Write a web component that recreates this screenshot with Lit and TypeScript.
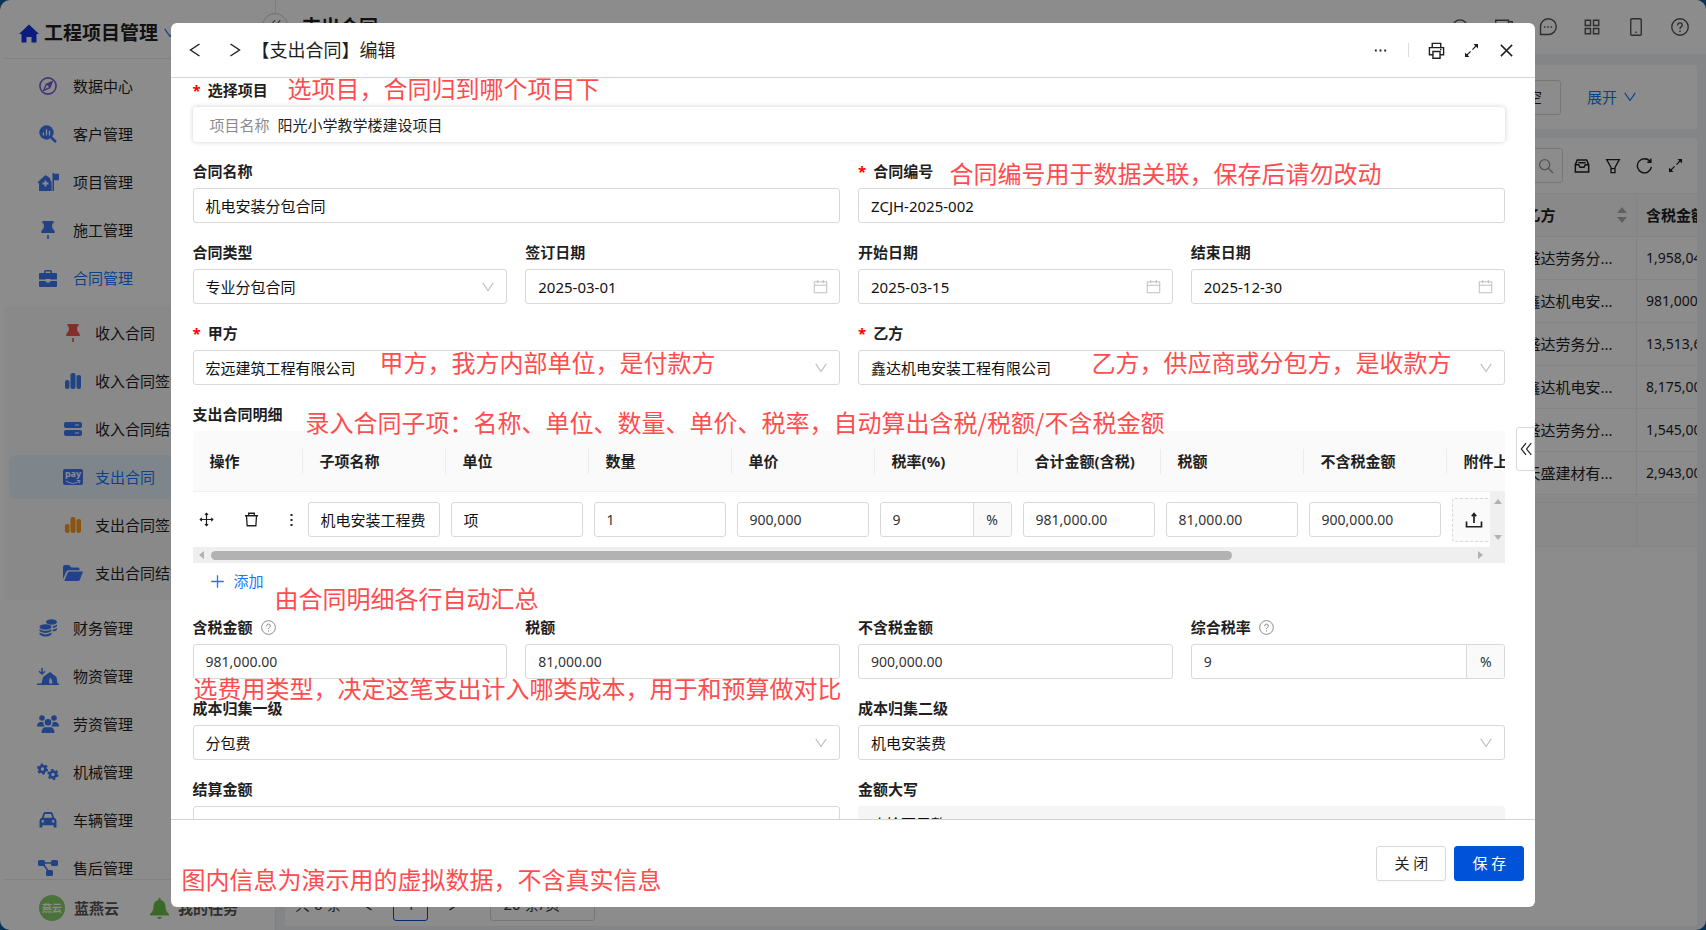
import { LitElement, html, css, svg, nothing } from "lit";
import { customElement } from "lit/decorators.js";
import { classMap } from "lit/directives/class-map.js";
import { styleMap } from "lit/directives/style-map.js";

const line = (body: unknown, size = 18, width = 1.4, box = 24) => html`<svg
  width=${size} height=${size} viewBox="0 0 ${box} ${box}" fill="none" stroke="currentColor"
  stroke-width=${width * box / size} aria-hidden="true">${body}</svg>`;
const solid = (body: unknown, w = 20, h = 18, box = "0 0 20 18") => html`<svg
  width=${w} height=${h} viewBox=${box} fill="currentColor" aria-hidden="true">${body}</svg>`;

const icons = {
  home: solid(svg`<path d="M10 0 0 9.5h2.5V18h5v-5.5h5V18h5V9.5H20z"/>`, 20, 19, "0 0 20 18"),
  compass: html`<svg width="18" height="18" viewBox="0 0 18 18" aria-hidden="true"><circle cx="9" cy="9" r="8.1" fill="none" stroke="currentColor" stroke-width="1.6"/><path d="M13.2 4.6 7.3 7.3 4.8 13.3l6-2.6z" fill="none" stroke="currentColor" stroke-width="1.4"/><path d="M13 4.8 7.6 7.6l2.8 2.8z" fill="currentColor"/></svg>`,
  customer: solid(svg`<circle cx="7.5" cy="7.5" r="7.2"/><path d="M12.2 12.5 17 17" stroke="currentColor" stroke-width="2.6"/><path d="M4.4 7.5v3M7.5 4.3v6.2M10.5 6v4.5" stroke="#fff" stroke-width="1.3"/>`, 18, 18, "0 0 18 18"),
  project: solid(svg`<path d="M8.5 2 0 9.7h2V18h12.600V9L13 6V5zM15.500 18V0h1.500v.8h5v6.500h-5V18z"/><path d="M8.500 7.500v6M5.500 10.500h6" stroke="#fff" stroke-width="1.800"/>`, 22, 18, "0 0 22 18"),
  pin: solid(svg`<path d="M1.500 0h11v2.500h-1.300v4.200L13.700 10v2H.300v-2l2.500-3.300V2.500H1.500zM6.200 14h1.600v4H6.200z"/>`, 14, 18, "0 0 14 18"),
  briefcase: solid(svg`<path d="M5 3V1.500Q5 0 6.500 0h5Q13 0 13 1.500V3h4q1 0 1 1v5.500h-6.500V9h-5v.5H0V4q0-1 1-1zM6.500 3h5V1.500h-5zM0 11h6.500q0 1.800 2.500 1.800t2.500-1.800H18V16q0 1-1 1H1q-1 0-1-1z" fill-rule="evenodd"/>`, 18, 17, "0 0 18 17"),
  bars: solid(svg`<rect x="0" y="7" width="4.500" height="9" rx="2"/><rect x="5.500" y="0" width="5" height="16" rx="2"/><rect x="11.500" y="2" width="4.500" height="14" rx="2"/>`, 16, 16, "0 0 16 16"),
  server: solid(svg`<rect width="18" height="6" rx="2"/><rect y="8" width="18" height="6" rx="2"/><path d="M11 3h4M11 11h4" stroke="#fff" stroke-width="1"/>`, 18, 14, "0 0 18 14"),
  folder: solid(svg`<path d="M0 14V2Q0 0 2 0h4l2.500 2.500H15q1.500 0 1.500 1.500v1.200H5.500Q4 5.200 3.300 6.800zM1.300 16 4.500 8Q5 6.500 6.500 6.500H20L17 14.500Q16.500 16 15 16z"/>`, 20, 16, "0 0 20 16"),
  coins: solid(svg`<ellipse cx="12.500" cy="3" rx="5.500" ry="2.800"/><ellipse cx="6.500" cy="8" rx="6" ry="2.700"/><path d="M.500 10.200q6 3.600 12 0v1.800q-6 3.800-12 0zM.500 13.600q6 3.600 12 0v1.800q-6 4.400-12 0zM13.800 7q3-.400 4.200-1.600v1.800Q16.500 8.600 13.800 9zM13.800 10.600q3-.400 4.200-1.600v1.800q-1.500 1.400-4.200 1.800z"/>`, 18, 18, "0 0 18 18"),
  goods: solid(svg`<path d="M0 15.500h4.500L6 9l7-5 6.500 5 1 6.500H22V17H0zM13 9.500q-.8 2-.8 6h3.300q-.2-4-2.500-6z" fill-rule="evenodd"/><path d="M5 0v6M2 3.200 5 6l3-2.800" fill="none" stroke="currentColor" stroke-width="1.500"/>`, 22, 17, "0 0 22 17"),
  people: solid(svg`<circle cx="5" cy="3" r="2.800"/><circle cx="17" cy="3" r="2.800"/><circle cx="11" cy="7.200" r="3.300"/><path d="M0 11.500Q0 7 4 7h2.200q0 3 2 4.500zM22 11.500Q22 7 18 7h-2.200q0 3-2 4.500zM4.500 18Q4.500 12.300 9 12.300h4q4.500 0 4.500 5.700z"/>`, 22, 18, "0 0 22 18"),
  gears: solid(svg`<g fill="none" stroke="currentColor"><circle cx="5.500" cy="6" r="3" stroke-width="2.600"/><circle cx="5.500" cy="6" r="4.700" stroke-width="1.800" stroke-dasharray="2.460"/><circle cx="16" cy="11.500" r="3" stroke-width="2.600"/><circle cx="16" cy="11.500" r="4.700" stroke-width="1.800" stroke-dasharray="2.460"/></g>`, 22, 18, "0 0 22 18"),
  car: solid(svg`<path d="M3.800 1.800Q4.300 0 6 0h6q1.700 0 2.200 1.800L15.500 6Q18 6.800 18 9v7.500h-3V14H3v2.500H0V9Q0 6.800 2.500 6zM4.500 6h9L12.300 2.200H5.700zM3.500 8.500a1.400 1.400 0 1 0 .010 0zM14.500 8.500a1.400 1.400 0 1 0 .010 0z" fill-rule="evenodd"/>`, 18, 16, "0 0 18 17"),
  nodes: solid(svg`<rect width="7" height="6" rx="1.500"/><rect x="13" width="7" height="6" rx="1.500"/><rect x="8" y="10" width="7" height="6" rx="1.500"/><path d="M6 3h8M5.500 4.500l5 7" stroke="currentColor" stroke-width="1.500"/>`, 20, 16, "0 0 20 16"),
  bell: solid(svg`<path d="M8.500 0h2v2q5 1 5 6.500 0 4.500 3.500 7.500v1.500H0V16q3.500-3 3.500-7.500Q3.500 3 8.500 2zM7 19h5q-.500 2-2.500 2T7 19z"/>`, 19, 21, "0 0 19 21"),
  down: line(svg`<path d="M3 5l9 13 9-13"/>`, 14, 1.2),
  left: line(svg`<path d="M18 4 6 12l12 8"/>`, 18, 1.4),
  right: line(svg`<path d="M6 4l12 8-12 8"/>`, 18, 1.4),
  monitor: line(svg`<path d="M1 3h17v16H1zM18 5h5v5"/>`),
  ring: line(svg`<circle cx="12" cy="12" r="9.500"/>`),
  chat: line(svg`<path d="M2 22h10A10.500 10.500 0 1 0 2 12z"/><path d="M6.500 12h2M11 12h2M15.500 12h2"/>`),
  grid: line(svg`<path d="M3 3h7v7H3zM14 3h7v7h-7zM3 14h7v7H3zM14 14h7v7h-7z"/>`),
  phone: line(svg`<rect x="5" y="1" width="14" height="22" rx="1.500"/><path d="M11 19h2"/>`),
  help: line(svg`<circle cx="12" cy="12" r="11"/><path d="M9 10q0-3.500 3-3.500t3 3q0 1.500-1.500 2.300T12 14.500M12 16.500v2"/>`),
  search: line(svg`<circle cx="10" cy="10" r="7.500"/><path d="m15.500 15.500 7 7"/>`, 16, 1.3),
  inbox: line(svg`<path d="M2 10 5 3h14l3 7v11H2zM2 10h5l2 4h6l2-4h5M6.500 7h11"/>`, 16, 1.5),
  filter: line(svg`<path d="M2.500 2.500h19L15 14v8H9v-8zM9 16h6"/>`, 16, 1.3),
  reload: line(svg`<path d="M20 6.500A10 10 0 1 0 21.800 14M21 2v5.500h-5"/>`, 17, 1.4),
  expand: line(svg`<path d="M20 4l-6.500 6.500M10.500 13.500 4 20"/><path d="M17.500 2.500h4v4zM2.500 17.500v4h4z" fill="currentColor"/>`, 15, 1.2),
  print: line(svg`<path d="M6 8V2h12v6M6 18H2V8h20v10h-4M7 13.500h10V23H7zM17 10.500h2"/>`, 17, 1.4),
  close: line(svg`<path d="M3 3l18 18M21 3 3 21"/>`, 15, 1.5),
  calendar: line(svg`<path d="M2 4.500h20V22H2zM2 10h20M7.500 1.500V7M16.500 1.500V7"/>`, 15, 1),
  move: line(svg`<path d="M12 2v20M2 12h20M9.500 4.500 12 2l2.500 2.500M9.500 19.500 12 22l2.500-2.500M4.500 9.500 2 12l2.500 2.500M19.500 9.500 22 12l-2.500 2.500"/>`, 15, 1.2),
  trash: line(svg`<path d="M1.500 6h21M7.500 6V2h9v4M4 6l1 16h14l1-16"/>`, 15, 1.3),
  upload: line(svg`<path d="M2 14v7h20v-7M12 16V4M9 7l3-3.500L15 7"/>`, 18, 1.7),
  plus: line(svg`<path d="M12 2v20M2 12h20"/>`, 15, 1.3),
  fold: line(svg`<path d="M12 2 4 12l8 10M21 2l-8 10 8 10"/>`, 14, 1.2),
};

interface MenuItem { text: string; icon: unknown; tone?: string; active?: boolean }

const topMenu: MenuItem[] = [
  { text: "数据中心", icon: icons.compass, tone: "purple" },
  { text: "客户管理", icon: icons.customer },
  { text: "项目管理", icon: icons.project },
  { text: "施工管理", icon: icons.pin },
  { text: "合同管理", icon: icons.briefcase, active: true },
];
const subMenu: MenuItem[] = [
  { text: "收入合同", icon: icons.pin, tone: "red" },
  { text: "收入合同签证", icon: icons.bars },
  { text: "收入合同结算", icon: icons.server },
  { text: "支出合同", icon: html`<span class="pay"><span>pay</span><svg width="18" height="5" viewBox="0 0 18 5" aria-hidden="true"><path d="M2 1q7 4.500 13 .500M13 .500l3-.200-.500 3" fill="none" stroke="#fff"/></svg></span>`, active: true },
  { text: "支出合同签证", icon: icons.bars, tone: "orange" },
  { text: "支出合同结算", icon: icons.folder },
];
const lowMenu: MenuItem[] = [
  { text: "财务管理", icon: icons.coins },
  { text: "物资管理", icon: icons.goods },
  { text: "劳资管理", icon: icons.people },
  { text: "机械管理", icon: icons.gears },
  { text: "车辆管理", icon: icons.car },
  { text: "售后管理", icon: icons.nodes },
];

const rows = [
  ["盛达劳务分...", "1,958,040.00"],
  ["鑫达机电安...", "981,000.00"],
  ["盛达劳务分...", "13,513,600.00"],
  ["鑫达机电安...", "8,175,000.00"],
  ["盛达劳务分...", "1,545,000.00"],
  ["天盛建材有...", "2,943,000.00"],
];

/* Remarks laid over the dialog; x and y are measured from its top left corner. */
const notes = [
  { x: 117, y: 48, text: "选项目，合同归到哪个项目下" },
  { x: 779, y: 133, text: "合同编号用于数据关联，保存后请勿改动" },
  { x: 209, y: 322, text: "甲方，我方内部单位，是付款方" },
  { x: 921, y: 322, text: "乙方，供应商或分包方，是收款方" },
  { x: 135, y: 382, text: "录入合同子项：名称、单位、数量、单价、税率，自动算出含税/税额/不含税金额" },
  { x: 104, y: 558, text: "由合同明细各行自动汇总" },
  { x: 23, y: 648, text: "选费用类型，决定这笔支出计入哪类成本，用于和预算做对比" },
  { x: 11, y: 839, text: "图内信息为演示用的虚拟数据，不含真实信息" },
];

const base = css`
  * { box-sizing: border-box; }
  :host { font-family: "Noto Sans", "Noto Sans CJK SC", sans-serif; font-size: 15px; line-height: 24px; color: #1f1f1f; }
  svg { display: block; flex: none; }
  button { font: inherit; color: inherit; background: none; border: 0; padding: 0; margin: 0; cursor: pointer; }
  a { color: inherit; text-decoration: none; }
  input, select { font: inherit; color: inherit; min-width: 0; margin: 0; }
`;

@customElement("app-sidebar")
class AppSidebar extends LitElement {
  static styles = [base, css`
    :host { display: flex; flex-direction: column; width: 276px; flex: none; background: #fff; border-right: 1px solid #e6e6e6; padding-left: 4px; min-height: 0; }
    .brand { display: flex; align-items: center; gap: 5px; height: 59px; padding: 8px 0 0 15px; border-bottom: 1px solid #ededed; font-size: 19px; font-weight: 700; flex: none; }
    .brand .logo { color: #1433e6; }
    .brand .arrow { color: #1677ff; }
    nav { flex: 1; min-height: 0; overflow: hidden; }
    ul { list-style: none; margin: 0; padding: 0; display: grid; gap: 4px; }
    .item { display: flex; align-items: center; gap: 14px; height: 44px; margin: 0 5px; padding-left: 28px; border-radius: 6px; white-space: nowrap; }
    .ico { width: 22px; display: grid; place-items: center; color: #3f78f5; }
    .purple .ico { color: #7a5fd8; }
    .red .ico { color: #f0524f; }
    .orange .ico { color: #f79a1e; }
    .active { color: #1677ff; }
    .main { padding: 5px 0 6px; }
    .sub { background: #fafafa; padding: 5px 0; }
    .sub .item { padding-left: 53px; gap: 11px; }
    .sub .active { background: #e6f4ff; }
    .low { padding-top: 6px; }
    .pay { display: grid; justify-items: center; width: 20px; height: 16px; border-radius: 2px; background: #3f78f5; color: #fff; font-size: 9px; line-height: 10px; font-weight: 700; }
    .foot { display: flex; align-items: center; height: 51px; padding: 6px 0 0 35px; border-top: 1px solid #ededed; flex: none; color: #555; font-weight: 700; }
    .avatar { width: 26px; height: 26px; border-radius: 50%; background: #87d068; color: #fff; font-size: 10px; display: grid; place-items: center; margin-right: 9px; }
    .bell { color: #6cc04a; margin: 0 9px 0 31px; }
  `];
  private list(items: MenuItem[], kind: string) {
    return html`<ul class=${kind}>${items.map((m) => html`<li><a href="#" class=${classMap({ item: true, active: !!m.active, [m.tone ?? "blue"]: true })}><span class="ico">${m.icon}</span>${m.text}</a></li>`)}</ul>`;
  }
  render() {
    return html`
      <div class="brand"><span class="logo">${icons.home}</span>工程项目管理<span class="arrow">${icons.down}</span></div>
      <nav>${this.list(topMenu, "main")}${this.list(subMenu, "sub")}${this.list(lowMenu, "low")}</nav>
      <div class="foot"><span class="avatar">燕云</span>蓝燕云<span class="bell">${icons.bell}</span>我的任务</div>`;
  }
}

@customElement("app-list")
class AppList extends LitElement {
  static styles = [base, css`
    :host { display: flex; flex-direction: column; flex: 1; min-width: 0; background: #f0f2f5; }
    header { display: flex; align-items: center; height: 54px; background: #fff; padding: 0 17px 0 26px; color: #555; flex: none; }
    h1 { margin: 0 auto 0 0; font-size: 19px; color: #1f1f1f; }
    .tools { display: flex; gap: 26px; }
    .content { display: flex; flex-direction: column; gap: 9px; flex: 1; min-height: 0; padding: 11px 9px 4px; }
    .card { background: #fff; border-radius: 3px; }
    .query { display: flex; align-items: center; justify-content: flex-end; height: 64px; padding-right: 60px; gap: 26px; }
    .plain { border: 1px solid #d9d9d9; border-radius: 3px; height: 35px; padding: 0 18px; }
    .more { display: flex; align-items: center; gap: 6px; color: #1677ff; }
    .data { flex: 1; display: flex; flex-direction: column; min-height: 0; }
    .bar { display: flex; align-items: center; justify-content: flex-end; height: 55px; gap: 15px; padding-right: 14px; }
    .bar .find { display: flex; align-items: center; border: 1px solid #d9d9d9; border-radius: 3px; height: 35px; padding: 0 8px; color: #999; margin-right: -4px; }
    .find input { border: 0; outline: 0; width: 180px; }
    .clip { overflow: hidden; display: flex; flex-direction: column; align-items: flex-end; }
    table { border-collapse: collapse; table-layout: fixed; width: 181px; }
    td, th { height: 43px; padding: 0 9px; text-align: left; border-top: 1px solid #f0f0f0; border-bottom: 1px solid #f0f0f0; white-space: nowrap; overflow: hidden; }
    td:last-child, th:last-child { border-left: 1px solid #f0f0f0; padding-right: 0; }
    th { background: #fafafa; font-weight: 700; }
    td:last-child { font-size: 14px; }
    .sort { display: flex; justify-content: space-between; align-items: center; }
    .party { width: 120px; }
    .gap td { height: 8px; padding: 0; background: #fafafa; }
    .sum td { height: 44px; background: #fafafa; }
    .page { display: flex; align-items: center; gap: 17px; margin-top: auto; padding: 0 10px 5px; color: #333; }
    .page .now { border: 1px solid #0052d9; color: #0052d9; border-radius: 3px; width: 35px; height: 35px; }
    .page select { appearance: none; background: #fff; border: 1px solid #d9d9d9; border-radius: 3px; height: 35px; width: 105px; padding: 0 12px; margin-left: 10px; }
  `];
  render() {
    return html`
      <header><h1>支出合同</h1><div class="tools">${icons.ring}${icons.monitor}${icons.chat}${icons.grid}${icons.phone}${icons.help}</div></header>
      <div class="content">
        <div class="card query"><button class="plain">清空</button><a class="more" href="#">展开 ${icons.down}</a></div>
        <div class="card data">
          <div class="bar"><label class="find"><input aria-label="搜索" />${icons.search}</label>${icons.inbox}${icons.filter}${icons.reload}${icons.expand}</div>
          <div class="clip"><table>
            <thead><tr><th class="party"><span class="sort">乙方<svg width="10" height="16" viewBox="0 0 10 16" fill="#b0b0b0" aria-hidden="true"><path d="M5 0l5 6H0zM5 16l5-6H0z"/></svg></span></th><th>含税金额</th></tr></thead>
            <tbody>${rows.map(([a, b]) => html`<tr><td>${a}</td><td>${b}</td></tr>`)}
              <tr class="gap"><td colspan="2"></td></tr><tr class="sum"><td></td><td></td></tr></tbody>
          </table></div>
          <div class="page"><span>共 6 条</span>${icons.left}<button class="now">1</button>${icons.right}<select aria-label="每页条数"><option>20 条/页</option></select></div>
        </div>
      </div>`;
  }
}

@customElement("contract-dialog")
class ContractDialog extends LitElement {
  static styles = [base, css`
    :host { position: relative; display: flex; flex-direction: column; width: 80vw; height: 95vh; background: #fff; border-radius: 6px; }
    header { display: flex; align-items: center; height: 55px; padding: 0 11px 0 15px; border-bottom: 1px solid #d4d4d4; flex: none; }
    h2 { margin: 0 auto 0 0; font-size: 18px; font-weight: 400; }
    header button { display: grid; place-items: center; width: 35px; height: 32px; }
    .step { width: 18px; margin-right: 22px; }
    .step.next { margin-right: 8px; }
    .rule { width: 1px; height: 14px; background: #ddd; margin: 0 10px; }
    form { flex: 1; min-height: 0; overflow: hidden; padding: 0 30px 0 22px; display: flex; flex-direction: column; gap: 17px; }
    .row { display: grid; grid-template-columns: repeat(4, minmax(0, 1fr)); gap: 18px; flex: none; }
    .field { display: flex; flex-direction: column; gap: 5px; min-width: 0; }
    .half { grid-column: span 2; }
    .full { grid-column: span 4; }
    .label { display: flex; align-items: center; gap: 8px; font-weight: 700; height: 24px; }
    .req { gap: 7px; }
    .req::before { content: "*"; color: #f00; }
    .label svg { color: #8c8c8c; }
    .box { display: flex; align-items: center; height: 35px; border: 1px solid #d9d9d9; border-radius: 3px; background: #fff; overflow: hidden; color: #111; }
    .box input, .box select { flex: 1; width: 0; height: 100%; border: 0; outline: 0; background: none; padding: 0 11px 0 12px; appearance: none; }
    .box > svg { margin-right: 11px; color: #bfbfbf; }
    .num input { font-size: 14px; color: #333; }
    .unit { display: grid; place-items: center; width: 38px; align-self: stretch; border-left: 1px solid #d9d9d9; background: #fafafa; font-size: 14px; color: #333; }
    .off { background: #f5f5f5; border-color: #f5f5f5; }
    .project { display: flex; align-items: center; gap: 8px; height: 35px; padding: 0 17px; border-radius: 4px; box-shadow: 0 0 5px rgba(0, 0, 0, .2); color: #1f1f1f; }
    .project span { color: #8c8c8c; }
    .detail { position: relative; overflow: hidden; border-radius: 4px 4px 0 0; }
    table { border-collapse: separate; border-spacing: 0; table-layout: fixed; width: 1397px; }
    th { height: 61px; padding: 0 0 0 17px; text-align: left; background: linear-gradient(#ececec, #ececec) right 18px / 1px 25px no-repeat #fafafa; border-bottom: 1px solid #f0f0f0; font-weight: 700; }
    td { height: 55px; padding: 0 6px 0 5px; }
    .first { width: 110px; }
    .mid { width: 143px; }
    .ops { display: flex; align-items: center; justify-content: space-between; padding: 0 4px 0 1px; }
    .upload { display: grid; place-items: center; width: 44px; height: 44px; border: 1px dashed #d9d9d9; border-radius: 3px; background: #fafafa; }
    .vbar { position: absolute; right: 0; top: 61px; width: 15px; height: 55px; background: #efefef; display: flex; flex-direction: column; align-items: center; justify-content: space-between; padding: 7px 0; color: #b2b2b2; }
    .hbar { display: flex; align-items: center; height: 16px; background: #efefef; padding: 0 22px 0 6px; color: #b2b2b2; gap: 7px; }
    .track { flex: 1; }
    .thumb { width: 81%; height: 9px; border-radius: 5px; background: #b2b2b2; }
    .add { display: flex; align-items: center; gap: 9px; color: #1677ff; padding-left: 17px; height: 24px; margin-top: 1px; align-self: flex-start; }
    .items-row { margin-bottom: 5px; }
    footer { display: flex; align-items: center; justify-content: flex-end; gap: 8px; height: 88px; padding-right: 11px; border-top: 1px solid #d4d4d4; flex: none; }
    footer button { width: 70px; height: 35px; border: 1px solid #d9d9d9; border-radius: 3px; box-shadow: 0 2px 0 rgba(0, 0, 0, .02); }
    footer .save { background: #0052d9; border-color: #0052d9; color: #fff; }
    .drawer { position: absolute; right: 0; top: 404px; width: 19px; height: 44px; border: 1px solid #d9d9d9; border-radius: 3px 0 0 3px; background: #fff; display: grid; place-items: center; }
    .note { position: absolute; margin: 0; font-size: 24px; line-height: 34px; color: #ff4d4f; white-space: nowrap; font-weight: 400; font-family: "Noto Sans CJK SC", sans-serif; pointer-events: none; }
  `];
  private input(id: string, text: string, value: string, o: { wide?: boolean; req?: boolean; num?: boolean; help?: boolean; unit?: boolean; date?: boolean; off?: boolean } = {}) {
    return html`<div class=${classMap({ field: true, half: !!o.wide })}>
      <label class=${classMap({ label: true, req: !!o.req })} for=${id}>${text}${o.help ? line(svg`<circle cx="12" cy="12" r="11"/><path d="M9 10q0-3.500 3-3.500t3 3q0 1.500-1.500 2.300T12 14.500M12 16.500v2"/>`, 15, 1) : nothing}</label>
      <div class=${classMap({ box: true, num: !!o.num, off: !!o.off })}><input id=${id} .value=${value} ?disabled=${!!o.off} />${o.unit ? html`<span class="unit">%</span>` : nothing}${o.date ? icons.calendar : nothing}</div>
    </div>`;
  }
  private select(id: string, text: string, value: string, wide = true, req = false) {
    return html`<div class=${classMap({ field: true, half: wide })}>
      <label class=${classMap({ label: true, req })} for=${id}>${text}</label>
      <div class="box"><select id=${id}><option>${value}</option></select>${icons.down}</div>
    </div>`;
  }
  private cell(name: string, value: string, num = true, unit = false) {
    return html`<td><div class=${classMap({ box: true, num })}><input aria-label=${name} .value=${value} />${unit ? html`<span class="unit">%</span>` : nothing}</div></td>`;
  }
  render() {
    const cols = ["子项名称", "单位", "数量", "单价", "税率(%)", "合计金额(含税)", "税额", "不含税金额"];
    return html`
      <header>
        <button class="step" aria-label="上一条">${icons.left}</button><button class="step next" aria-label="下一条">${icons.right}</button>
        <h2>【支出合同】编辑</h2>
        <button aria-label="更多">${line(svg`<path d="M3 12h3M10.500 12h3M18 12h3"/>`, 15, 1.8)}</button><span class="rule"></span>
        <button aria-label="打印">${icons.print}</button><button aria-label="全屏">${icons.expand}</button><button aria-label="关闭窗口">${icons.close}</button>
      </header>
      <form @submit=${(e: Event) => e.preventDefault()}>
        <div class="row"><div class="field full"><div class="label req">选择项目</div><div class="project"><span>项目名称</span>阳光小学教学楼建设项目</div></div></div>
        <div class="row">${this.input("name", "合同名称", "机电安装分包合同", { wide: true })}${this.input("code", "合同编号", "ZCJH-2025-002", { wide: true, req: true })}</div>
        <div class="row">${this.select("kind", "合同类型", "专业分包合同", false)}${this.input("sign", "签订日期", "2025-03-01", { date: true })}${this.input("start", "开始日期", "2025-03-15", { date: true })}${this.input("end", "结束日期", "2025-12-30", { date: true })}</div>
        <div class="row">${this.select("a", "甲方", "宏远建筑工程有限公司", true, true)}${this.select("b", "乙方", "鑫达机电安装工程有限公司", true, true)}</div>
        <div class="row items-row"><div class="field full">
          <div class="label">支出合同明细</div>
          <div class="detail">
            <table>
              <thead><tr><th class="first">操作</th>${cols.map((c) => html`<th class="mid">${c}</th>`)}<th class="mid">附件上传</th></tr></thead>
              <tbody><tr>
                <td><div class="ops"><button type="button" aria-label="移动">${icons.move}</button><button type="button" aria-label="删除">${icons.trash}</button><button type="button" aria-label="更多操作"><svg width="3" height="14" viewBox="0 0 3 14" fill="currentColor" aria-hidden="true"><path d="M.500 1h2v2h-2zM.500 6h2v2h-2zM.500 11h2v2h-2z"/></svg></button></div></td>
                ${this.cell("子项名称", "机电安装工程费", false)}${this.cell("单位", "项", false)}${this.cell("数量", "1")}${this.cell("单价", "900,000")}${this.cell("税率", "9", true, true)}${this.cell("合计金额", "981,000.00")}${this.cell("税额", "81,000.00")}${this.cell("不含税金额", "900,000.00")}
                <td><button type="button" class="upload" aria-label="上传附件">${icons.upload}</button></td>
              </tr></tbody>
            </table>
            <div class="vbar"><svg width="8" height="5" fill="currentColor" aria-hidden="true"><path d="M4 0l4 5H0z"/></svg><svg width="8" height="5" fill="currentColor" aria-hidden="true"><path d="M4 5l4-5H0z"/></svg></div>
            <div class="hbar"><svg width="5" height="8" fill="currentColor" aria-hidden="true"><path d="M0 4l5-4v8z"/></svg><div class="track"><div class="thumb"></div></div><svg width="5" height="8" fill="currentColor" aria-hidden="true"><path d="M5 4 0 0v8z"/></svg></div>
          </div>
          <button type="button" class="add">${icons.plus}添加</button>
        </div></div>
        <div class="row">${this.input("gross", "含税金额", "981,000.00", { num: true, help: true })}${this.input("tax", "税额", "81,000.00", { num: true })}${this.input("net", "不含税金额", "900,000.00", { num: true })}${this.input("rate", "综合税率", "9", { num: true, help: true, unit: true })}</div>
        <div class="row">${this.select("c1", "成本归集一级", "分包费")}${this.select("c2", "成本归集二级", "机电安装费")}</div>
        <div class="row">${this.input("settle", "结算金额", "", { wide: true })}${this.input("words", "金额大写", "玖拾万元整", { wide: true, off: true })}</div>
      </form>
      <footer><button type="button">关 闭</button><button type="button" class="save">保 存</button></footer>
      <button class="drawer" aria-label="展开侧栏">${icons.fold}</button>
      ${notes.map((n) => html`<p class="note" style=${styleMap({ left: `${n.x}px`, top: `${n.y}px` })}>${n.text}</p>`)}`;
  }
}

@customElement("app-root")
class AppRoot extends LitElement {
  static styles = [base, css`
    :host { position: relative; display: block; height: 100vh; overflow: hidden; background: #12609c; }
    .shell { position: relative; display: flex; height: 100%; border-radius: 10px; overflow: hidden; }
    .knob { position: absolute; left: 262px; top: 13px; width: 26px; height: 26px; border: 1px solid #ccc; border-radius: 50%; background: #fff; display: grid; place-items: center; color: #666; }
    .mask { position: absolute; inset: 0; display: grid; place-items: center; background: rgba(0, 0, 0, .45); }
  `];
  render() {
    return html`<div class="shell"><app-sidebar></app-sidebar><app-list></app-list><button class="knob" aria-label="收起菜单">${icons.fold}</button></div>
      <div class="mask"><contract-dialog role="dialog"></contract-dialog></div>`;
  }
}
